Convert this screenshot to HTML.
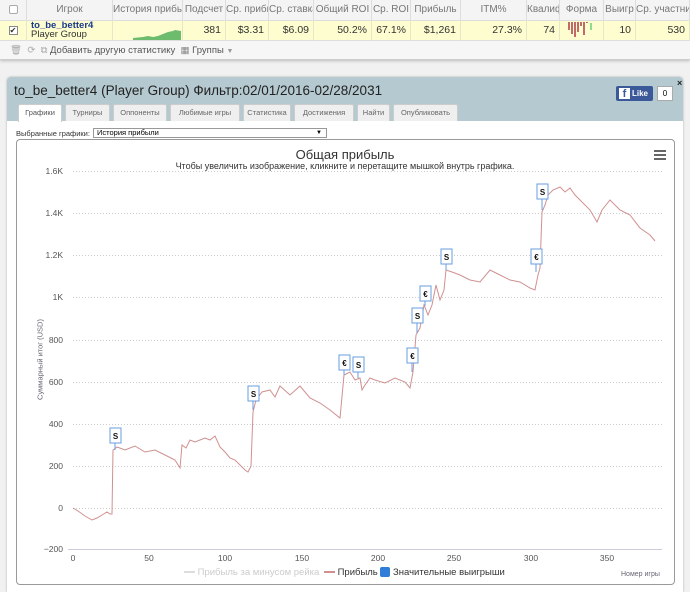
<!DOCTYPE html>
<html><head><meta charset="utf-8"><style>
*{margin:0;padding:0;box-sizing:border-box}
body{width:690px;height:592px;overflow:hidden;background:#f1f1f1;font-family:"Liberation Sans","DejaVu Sans",sans-serif;position:relative}
.a{position:absolute}
.hd{position:absolute;top:0;height:20px;border-right:1px solid #ddd;font-size:10px;color:#777;line-height:19px;text-align:center;white-space:nowrap;overflow:hidden;background:#f4f4f4}
.cl{position:absolute;top:20px;height:21px;border-right:1px solid #e6e6c8;font-size:10.5px;color:#333;line-height:20px;text-align:right;padding-right:4px;white-space:nowrap;overflow:hidden}
.tab{position:absolute;top:104px;height:17px;border:1px solid #ccc;border-bottom:none;background:#efefef;font-size:7.5px;color:#666;line-height:16px;text-align:center;border-radius:2px 2px 0 0}
.yl{position:absolute;right:627px;font-size:8.5px;color:#555;text-align:right}
.xl{position:absolute;top:553px;font-size:8.5px;color:#555;width:30px;margin-left:-15px;text-align:center}
</style></head><body>
<div class="a" style="left:0;top:0;width:690px;height:60px;background:#f6f6f6;border-bottom:1px solid #ccc;box-shadow:0 1px 3px #bbb"></div>
<div class="hd" style="left:0;width:27px"><span style="display:inline-block;width:9px;height:9px;border:1px solid #aaa;background:#fff;margin-top:5px;border-radius:2px"></span></div>
<div class="hd" style="left:27px;width:86px">Игрок</div>
<div class="hd" style="left:113px;width:70px">История прибы</div>
<div class="hd" style="left:183px;width:43px">Подсчет</div>
<div class="hd" style="left:226px;width:43px">Ср. прибь</div>
<div class="hd" style="left:269px;width:45px">Ср. ставка</div>
<div class="hd" style="left:314px;width:58px">Общий ROI</div>
<div class="hd" style="left:372px;width:39px">Ср. ROI</div>
<div class="hd" style="left:411px;width:50px">Прибыль</div>
<div class="hd" style="left:461px;width:66px">ITM%</div>
<div class="hd" style="left:527px;width:33px">Квалиф</div>
<div class="hd" style="left:560px;width:44px">Форма</div>
<div class="hd" style="left:604px;width:32px">Выигр</div>
<div class="hd" style="left:636px;width:54px">Ср. участник</div>
<div class="a" style="left:0;top:20px;width:690px;height:21px;background:#fdfdd0;border-top:1px solid #ddd;border-bottom:1px solid #ddd"></div>
<div class="cl" style="left:0;width:27px;text-align:center;padding:0"><span style="display:inline-block;width:9px;height:9px;border:1px solid #888;background:#fff;margin-top:6px;font-size:8px;line-height:7px">✔</span></div>
<div class="cl" style="left:27px;width:86px;text-align:left;padding-left:4px;line-height:9px;padding-top:1px"><b style="color:#1a3a8a;font-size:9.5px">to_be_better4</b><br><span style="font-size:9.5px">Player Group</span></div>
<div class="cl" style="left:113px;width:70px"><svg class="a" style="left:10px;top:4px" width="58" height="16"><path d="M10 16 L10 14 L20 13 L25 12 L30 13 L35 12 L40 10 L45 8 L50 7 L52 6 L58 7 L58 16 Z" fill="#6dbb6d"/></svg></div>
<div class="cl" style="left:183px;width:43px">381</div>
<div class="cl" style="left:226px;width:43px">$3.31</div>
<div class="cl" style="left:269px;width:45px">$6.09</div>
<div class="cl" style="left:314px;width:58px">50.2%</div>
<div class="cl" style="left:372px;width:39px">67.1%</div>
<div class="cl" style="left:411px;width:50px">$1,261</div>
<div class="cl" style="left:461px;width:66px">27.3%</div>
<div class="cl" style="left:527px;width:33px">74</div>
<div class="cl" style="left:560px;width:44px"><svg class="a" style="left:8px;top:2px" width="30" height="18"><g fill="#c06a6a"><rect x="0" y="0" width="2" height="8"/><rect x="3" y="0" width="2" height="12"/><rect x="6" y="0" width="2" height="15"/><rect x="9" y="0" width="2" height="10"/><rect x="12" y="0" width="2" height="4"/><rect x="15" y="0" width="2" height="13"/></g><rect x="18" y="0" width="2" height="1" fill="#c06a6a"/><rect x="22" y="1" width="2" height="7" fill="#8fdc8f"/></svg></div>
<div class="cl" style="left:604px;width:32px">10</div>
<div class="cl" style="left:636px;width:54px">530</div>
<div class="a" style="left:10px;top:45px;font-size:9.5px;color:#555;white-space:nowrap"><span style="color:#aaa">🗑&nbsp; ⟳ &nbsp;⧉</span> Добавить другую статистику &nbsp;<span style="color:#888">▦</span> Группы <span style="color:#999;font-size:7px">▼</span></div>

<div class="a" style="left:7px;top:77px;width:676px;height:515px;background:#fff;border-radius:4px 4px 0 0;box-shadow:0 0 2px #aaa"></div>
<div class="a" style="left:7px;top:77px;width:676px;height:44px;background:#b5c9d0;border-radius:4px 4px 0 0"></div>
<div class="a" style="left:14px;top:83px;font-size:13.5px;color:#222;white-space:nowrap">to_be_better4 (Player Group) Фильтр:02/01/2016-02/28/2031</div>
<div class="a" style="left:616px;top:86px;width:37px;height:15px;background:#3b5998;border-radius:2px;color:#fff;font-size:8px;font-weight:bold;line-height:15px"><span style="display:inline-block;width:11px;height:11px;background:#fff;color:#3b5998;margin:2px 2px 0 3px;font-size:11px;line-height:13px;text-align:center;vertical-align:top">f</span>Like</div>
<div class="a" style="left:657px;top:86px;width:16px;height:15px;background:#fff;border:1px solid #aaa;font-size:8px;text-align:center;line-height:13px">0</div>
<div class="a" style="left:677px;top:78px;font-size:9px;font-weight:bold;color:#222">×</div>
<div class="tab" style="left:18px;width:44px;background:#fff;color:#555;height:18px">Графики</div>
<div class="tab" style="left:65px;width:45px">Турниры</div>
<div class="tab" style="left:113px;width:54px">Оппоненты</div>
<div class="tab" style="left:170px;width:70px">Любимые игры</div>
<div class="tab" style="left:243px;width:48px">Статистика</div>
<div class="tab" style="left:294px;width:60px">Достижения</div>
<div class="tab" style="left:357px;width:33px">Найти</div>
<div class="tab" style="left:393px;width:65px">Опубликовать</div>
<div class="a" style="left:16px;top:129px;font-size:7.5px;color:#333;white-space:nowrap">Выбранные графики:</div>
<div class="a" style="left:93px;top:128px;width:234px;height:10px;border:1px solid #999;font-size:7.5px;line-height:8px;padding-left:3px;background:#fff">История прибыли<span style="position:absolute;right:4px;font-size:6px">▼</span></div>
<div class="a" style="left:16px;top:139px;width:659px;height:446px;border:1px solid #999;border-radius:4px;background:#fff"></div>
<div class="a" style="left:0;top:147px;width:690px;text-align:center;font-size:13px;color:#333">Общая прибыль</div>
<div class="a" style="left:0;top:161px;width:690px;text-align:center;font-size:9px;color:#333">Чтобы увеличить изображение, кликните и перетащите мышкой внутрь графика.</div>
<div class="a" style="left:654px;top:150px;width:12px;height:2px;background:#666;box-shadow:0 4px 0 #666,0 8px 0 #666"></div>
<div class="a" style="left:-30px;top:355px;width:140px;transform:rotate(-90deg);font-size:7.5px;color:#667;text-align:center">Суммарный итог (USD)</div>
<svg class="a" style="left:0;top:0" width="690" height="592">
<g stroke="#ccc" stroke-dasharray="1,2" stroke-width="1">
<line x1="73" y1="171.5" x2="662" y2="171.5"/><line x1="73" y1="213.5" x2="662" y2="213.5"/><line x1="73" y1="255.5" x2="662" y2="255.5"/><line x1="73" y1="297.5" x2="662" y2="297.5"/><line x1="73" y1="340.5" x2="662" y2="340.5"/><line x1="73" y1="382.5" x2="662" y2="382.5"/><line x1="73" y1="424.5" x2="662" y2="424.5"/><line x1="73" y1="466.5" x2="662" y2="466.5"/><line x1="73" y1="508.5" x2="662" y2="508.5"/>
</g>
<line x1="68" y1="549.5" x2="662" y2="549.5" stroke="#ccd" />
<path fill="none" stroke="#d09090" stroke-width="1" d="M73,508 L78,511 L85,516 L92,520 L97,518 L102,515 L107,512 L110,514 L112,514 L113,450 L117,447 L125,450 L135,446 L145,452 L155,450 L165,455 L175,460 L180,468 L182,445 L186,448 L190,440 L195,442 L200,440 L205,438 L210,440 L215,436 L220,447 L225,452 L230,458 L235,460 L240,465 L245,470 L248,472 L251,466 L253,412 L256,400 L262,392 L270,390 L275,397 L280,386 L290,395 L300,386 L310,398 L320,403 L330,410 L340,418 L344,375 L350,372 L355,380 L360,378 L362,390 L365,385 L370,378 L375,380 L385,383 L395,378 L405,382 L410,388 L413,372 L416,335 L420,328 L424,305 L428,315 L432,305 L436,285 L440,300 L444,290 L446,270 L452,272 L460,275 L470,280 L480,282 L490,270 L500,275 L510,280 L520,282 L530,288 L535,290 L538,275 L540,268 L542,212 L545,205 L548,195 L553,190 L560,187 L565,192 L570,188 L575,195 L580,200 L590,210 L597,222 L602,210 L610,200 L620,210 L630,215 L640,228 L650,235 L655,241"/>
<g font-size="8" font-weight="bold" text-anchor="middle" font-family="Liberation Sans">
<g fill="#fff" stroke="#6a9ee0"><rect x="110" y="428" width="11" height="15"/><rect x="248" y="386" width="11" height="15"/><rect x="339" y="355" width="11" height="15"/><rect x="353" y="357" width="11" height="15"/><rect x="407" y="348" width="11" height="15"/><rect x="412" y="308" width="11" height="15"/><rect x="420" y="286" width="11" height="15"/><rect x="441" y="249" width="11" height="15"/><rect x="531" y="249" width="11" height="15"/><rect x="537" y="184" width="11" height="15"/></g>
<g stroke="#6a9ee0"><line x1="115" y1="443" x2="115" y2="450"/><line x1="253" y1="401" x2="253" y2="410"/><line x1="344" y1="370" x2="344" y2="375"/><line x1="358" y1="372" x2="358" y2="378"/><line x1="412" y1="363" x2="412" y2="372"/><line x1="417" y1="323" x2="417" y2="333"/><line x1="425" y1="301" x2="425" y2="306"/><line x1="446" y1="264" x2="446" y2="270"/><line x1="536" y1="264" x2="536" y2="272"/><line x1="542" y1="199" x2="542" y2="210"/></g>
<g fill="#111"><text x="115.5" y="439">S</text><text x="253.5" y="397">S</text><text x="344.5" y="366">€</text><text x="358.5" y="368">S</text><text x="412.5" y="359">€</text><text x="417.5" y="319">S</text><text x="425.5" y="297">€</text><text x="446.5" y="260">S</text><text x="536.5" y="260">€</text><text x="542.5" y="195">S</text></g>
</g>
</svg>
<div class="yl" style="top:166px">1.6K</div><div class="yl" style="top:208px">1.4K</div><div class="yl" style="top:250px">1.2K</div><div class="yl" style="top:292px">1K</div><div class="yl" style="top:335px">800</div><div class="yl" style="top:377px">600</div><div class="yl" style="top:419px">400</div><div class="yl" style="top:461px">200</div><div class="yl" style="top:503px">0</div><div class="yl" style="top:544px">−200</div>
<div class="xl" style="left:73px">0</div><div class="xl" style="left:149px">50</div><div class="xl" style="left:225px">100</div><div class="xl" style="left:302px">150</div><div class="xl" style="left:378px">200</div><div class="xl" style="left:454px">250</div><div class="xl" style="left:531px">300</div><div class="xl" style="left:607px">350</div>
<div class="a" style="left:184px;top:567px;font-size:9.5px;color:#ccc;white-space:nowrap"><span style="display:inline-block;width:11px;height:2px;background:#ddd;vertical-align:middle"></span> Прибыль за минусом рейка <span style="display:inline-block;width:11px;height:2px;background:#d09090;vertical-align:middle;margin-left:2px"></span> <span style="color:#333">Прибыль</span> <span style="display:inline-block;width:10px;height:10px;background:#2f7ed8;vertical-align:middle;border-radius:2px"></span> <span style="color:#333">Значительные выигрыши</span></div>
<div class="a" style="left:621px;top:571px;font-size:7px;color:#667">Номер игры</div>
</body></html>
